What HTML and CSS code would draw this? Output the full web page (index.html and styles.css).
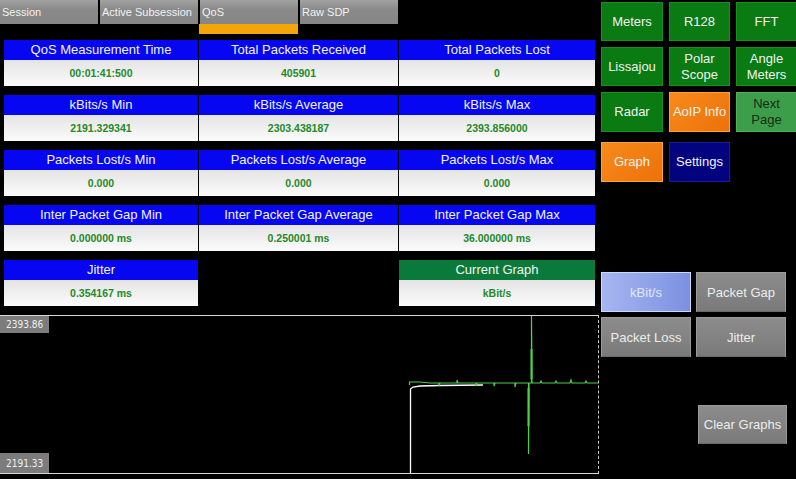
FILE: index.html
```html
<!DOCTYPE html>
<html>
<head>
<meta charset="utf-8">
<link rel="stylesheet" href="styles.css">
</head>
<body>
<div class="page">
  <div class="left">
    <div class="tabs">
      <div class="tab">Session</div>
      <div class="tab">Active Subsession</div>
      <div class="tab">QoS</div>
      <div class="tab">Raw SDP</div>
    </div>
    <div class="indicator-row"><span class="indicator"></span></div>
    <div class="stats">
      <div class="group">
        <div class="hd">QoS Measurement Time</div>
        <div class="hd">Total Packets Received</div>
        <div class="hd">Total Packets Lost</div>
        <div class="val">00:01:41:500</div>
        <div class="val">405901</div>
        <div class="val">0</div>
      </div>
      <div class="group">
        <div class="hd">kBits/s Min</div>
        <div class="hd">kBits/s Average</div>
        <div class="hd">kBits/s Max</div>
        <div class="val">2191.329341</div>
        <div class="val">2303.438187</div>
        <div class="val">2393.856000</div>
      </div>
      <div class="group">
        <div class="hd">Packets Lost/s Min</div>
        <div class="hd">Packets Lost/s Average</div>
        <div class="hd">Packets Lost/s Max</div>
        <div class="val">0.000</div>
        <div class="val">0.000</div>
        <div class="val">0.000</div>
      </div>
      <div class="group">
        <div class="hd">Inter Packet Gap Min</div>
        <div class="hd">Inter Packet Gap Average</div>
        <div class="hd">Inter Packet Gap Max</div>
        <div class="val">0.000000 ms</div>
        <div class="val">0.250001 ms</div>
        <div class="val">36.000000 ms</div>
      </div>
      <div class="group">
        <div class="hd">Jitter</div>
        <div class="empty"></div>
        <div class="hd hd-green">Current Graph</div>
        <div class="val">0.354167 ms</div>
        <div class="empty"></div>
        <div class="val">kBit/s</div>
      </div>
    </div>
    <div class="graph">
      <svg class="plot" width="598" height="157" viewBox="0 0 598 157">
        <polyline fill="none" stroke="#ffffff" stroke-width="1.3" points="410.5,158 410.5,73 413,71 420,70 440,69.5 483,69"/>
        <polyline fill="none" stroke="#4fd04f" stroke-width="1.2" points="409.5,69 409.5,66 420,66 430,67 439,67 439,70 440,67 457,67 457,64 458,67 476,67 476,70 477,67 494,67 494,70 495,67 515,67 515,71 516,67 527,67 528.5,67 528.5,138 529,67 531.5,67 531.5,0 532,67 540,67 541,65 542,67 555,67 556,65 557,67 570,67 571,64 572,67 585,67 586,65 587,67 598,67"/>
        <line x1="531.5" y1="33" x2="531.5" y2="63" stroke="#4fd04f" stroke-width="2"/>
        <line x1="528.5" y1="72" x2="528.5" y2="110" stroke="#4fd04f" stroke-width="2"/>
      </svg>
      <div class="axis axis-top">2393.86</div>
      <div class="axis axis-bottom">2191.33</div>
    </div>
  </div>
  <div class="right">
    <div class="nav">
      <div class="btn green">Meters</div>
      <div class="btn green">R128</div>
      <div class="btn green">FFT</div>
      <div class="btn green">Lissajou</div>
      <div class="btn green">Polar<br>Scope</div>
      <div class="btn green">Angle<br>Meters</div>
      <div class="btn green">Radar</div>
      <div class="btn orange">AoIP Info</div>
      <div class="btn light-green">Next<br>Page</div>
      <div class="btn orange row4">Graph</div>
      <div class="btn navy row4">Settings</div>
    </div>
    <div class="graph-btns">
      <div class="gbtn active">kBit/s</div>
      <div class="gbtn">Packet Gap</div>
      <div class="gbtn">Packet Loss</div>
      <div class="gbtn">Jitter</div>
    </div>
    <div class="clear-row">
      <div class="gbtn clear">Clear Graphs</div>
    </div>
  </div>
</div>
</body>
</html>
```

FILE: styles.css
```css
html, body {
  margin: 0;
  padding: 0;
  background: #000;
  width: 796px;
  height: 479px;
  overflow: hidden;
  font-family: "Liberation Sans", Arial, sans-serif;
}

.page {
  display: flex;
  width: 796px;
  height: 479px;
}

.left {
  width: 599px;
  flex: none;
  display: flex;
  flex-direction: column;
}

.tabs {
  display: flex;
  gap: 2px;
  height: 24px;
}

.tab {
  width: 98px;
  height: 24px;
  box-sizing: border-box;
  background: linear-gradient(#a2a2a2, #8a8a8a 40%, #868686);
  color: #f2f2f2;
  font-size: 11px;
  line-height: 24px;
  padding-left: 2px;
  white-space: nowrap;
  overflow: hidden;
}

.indicator-row {
  height: 10px;
  padding-left: 199px;
  display: flex;
}

.indicator {
  width: 99px;
  height: 10px;
  background: #f5a50a;
}

.stats {
  margin-top: 6px;
  margin-left: 4px;
  display: flex;
  flex-direction: column;
  gap: 9px;
}

.group {
  display: grid;
  grid-template-columns: 194px 199px 196px;
  grid-template-rows: 20px 26px;
  column-gap: 1px;
}

.hd {
  background: #0606f2;
  color: #f4f4f4;
  font-size: 13px;
  line-height: 20px;
  text-align: center;
  white-space: nowrap;
}

.hd-green {
  background: #0a7a3a;
}

.val {
  background: linear-gradient(#e4e4e4, #fbfbfb);
  color: #24892a;
  font-weight: bold;
  font-size: 10.5px;
  line-height: 26px;
  text-align: center;
}

.empty {
  background: transparent;
}

.graph {
  position: relative;
  margin-top: 9px;
  width: 598px;
  height: 157px;
  border-top: 1px solid #d8d8d8;
  border-bottom: 1px solid #d8d8d8;
  border-right: 1px dashed #c8c8c8;
}

.plot {
  position: absolute;
  left: 0;
  top: 0;
  display: block;
}

.axis {
  position: absolute;
  left: 0;
  width: 49px;
  box-sizing: border-box;
  padding-left: 6px;
  background: #7c7c7c;
  color: #f0f0f0;
  font-family: "DejaVu Sans Condensed", "DejaVu Sans", sans-serif;
  font-size: 10px;
}

.axis-top {
  top: 0;
  height: 17px;
  line-height: 17px;
}

.axis-bottom {
  bottom: 0;
  height: 20px;
  line-height: 22px;
}

.right {
  flex: 1;
  padding-top: 2px;
  padding-left: 2px;
  display: flex;
  flex-direction: column;
}

.nav {
  display: grid;
  grid-template-columns: 62px 61px 61px;
  grid-template-rows: 39px 39px 40px 44px;
  column-gap: 6px;
  row-gap: 6px;
}

.btn {
  box-sizing: border-box;
  display: flex;
  align-items: center;
  justify-content: center;
  text-align: center;
  color: #f2f2f2;
  font-size: 13px;
  line-height: 16px;
}

.row4 {
  margin-top: 4px;
}

.green {
  background: #0a7a12;
  border: 1px solid #17901f;
}

.light-green {
  background: #3c9e48;
  border: 1px solid #54b05e;
  color: #1a2a1a;
}

.orange {
  background: linear-gradient(135deg, #f88a1c, #ec7208);
  border: 1px solid #ffa040;
}

.navy {
  background: #030380;
  border: 1px solid #1a1a9a;
}

.graph-btns {
  margin-top: 90px;
  display: grid;
  grid-template-columns: 90px 90px;
  grid-template-rows: 40px 40px;
  gap: 5px;
}

.gbtn {
  box-sizing: border-box;
  display: flex;
  align-items: center;
  justify-content: center;
  background: linear-gradient(#8c8c8c, #7a7a7a);
  border: 1px solid #9c9c9c;
  border-bottom-color: #6a6a6a;
  color: #ececec;
  font-size: 13px;
  white-space: nowrap;
}

.gbtn.active {
  background: linear-gradient(90deg, #a6b6f2, #7c90e0);
  border: 1px solid #cdd8ff;
  color: #e0e8ff;
}

.clear-row {
  margin-top: 48px;
  padding-left: 97px;
  display: flex;
}

.gbtn.clear {
  width: 89px;
  height: 39px;
}
```
